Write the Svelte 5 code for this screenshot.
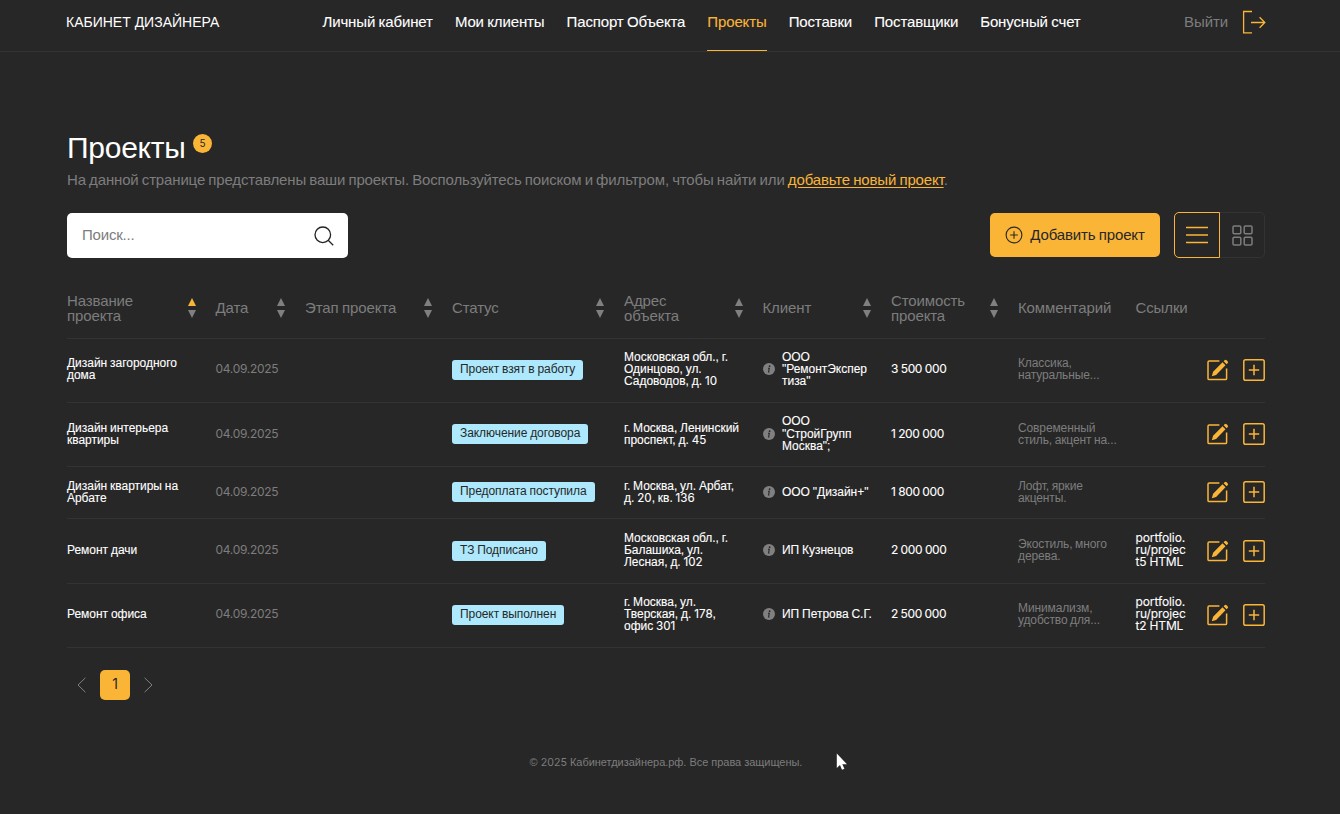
<script>
  const nav = [
    'Личный кабинет',
    'Мои клиенты',
    'Паспорт Объекта',
    'Проекты',
    'Поставки',
    'Поставщики',
    'Бонусный счет'
  ];

  const columns = [
    { label: 'Название\nпроекта', sort: 'asc' },
    { label: 'Дата', sort: 'none' },
    { label: 'Этап проекта', sort: 'none' },
    { label: 'Статус', sort: 'none' },
    { label: 'Адрес\nобъекта', sort: 'none' },
    { label: 'Клиент', sort: 'none' },
    { label: 'Стоимость\nпроекта', sort: 'none' },
    { label: 'Комментарий' },
    { label: 'Ссылки' },
    { label: '' }
  ];

  const projects = [
    {
      name: 'Дизайн загородного\nдома',
      date: '04.09.2025',
      status: 'Проект взят в работу',
      address: 'Московская обл., г.\nОдинцово, ул.\nСадоводов, д. 10',
      client: 'ООО\n"РемонтЭкспер\nтиза"',
      price: '3 500 000',
      comment: 'Классика,\nнатуральные...',
      link: ''
    },
    {
      name: 'Дизайн интерьера\nквартиры',
      date: '04.09.2025',
      status: 'Заключение договора',
      address: 'г. Москва, Ленинский\nпроспект, д. 45',
      client: 'ООО\n"СтройГрупп\nМосква";',
      price: '1 200 000',
      comment: 'Современный\nстиль, акцент на...',
      link: ''
    },
    {
      name: 'Дизайн квартиры на\nАрбате',
      date: '04.09.2025',
      status: 'Предоплата поступила',
      address: 'г. Москва, ул. Арбат,\nд. 20, кв. 136',
      client: 'ООО "Дизайн+"',
      price: '1 800 000',
      comment: 'Лофт, яркие\nакценты.',
      link: ''
    },
    {
      name: 'Ремонт дачи',
      date: '04.09.2025',
      status: 'ТЗ Подписано',
      address: 'Московская обл., г.\nБалашиха, ул.\nЛесная, д. 102',
      client: 'ИП Кузнецов',
      price: '2 000 000',
      comment: 'Экостиль, много\nдерева.',
      link: 'portfolio.\nru/projec\nt5 HTML'
    },
    {
      name: 'Ремонт офиса',
      date: '04.09.2025',
      status: 'Проект выполнен',
      address: 'г. Москва, ул.\nТверская, д. 178,\nофис 301',
      client: 'ИП Петрова С.Г.',
      price: '2 500 000',
      comment: 'Минимализм,\nудобство для...',
      link: 'portfolio.\nru/projec\nt2 HTML'
    }
  ];

  let active = $state('Проекты');
  let view = $state('list');
  let search = $state('');

  // digits are set in a different face than the cyrillic text
  const split = (str) => str.split(/(\d+)/).filter((s) => s !== '');
</script>

{#snippet mixed(str)}{#each split(str) as part}{#if /\d/.test(part)}<span class="num">{part}</span>{:else}{part}{/if}{/each}{/snippet}

<header>
  <a class="logo" href="#home">КАБИНЕТ ДИЗАЙНЕРА</a>
  <nav>
    {#each nav as item}
      <a href="#nav" class:active={item === active} onclick={() => (active = item)}>{item}</a>
    {/each}
  </nav>
  <a class="logout" href="#logout">
    Выйти
    <svg width="24" height="24" viewBox="0 0 24 24" fill="none" stroke="currentColor" stroke-width="1.3">
      <path d="M10 1.5H1.6v21.4H10M9 12.5h14M17.6 7.3l5.2 5.2-5.2 5.2" />
    </svg>
  </a>
</header>

<main>
  <div class="title">
    <h1>Проекты</h1>
    <span class="count">{projects.length}</span>
  </div>
  <p class="lead">
    На данной странице представлены ваши проекты. Воспользуйтесь поиском и фильтром, чтобы найти или <a href="#new">добавьте новый проект</a>.
  </p>

  <div class="toolbar">
    <label class="search">
      <input type="text" placeholder="Поиск..." bind:value={search} />
      <svg width="20" height="20" viewBox="0 0 20 20" fill="none" stroke="#222" stroke-width="1.3">
        <circle cx="8.8" cy="8.8" r="7.8" />
        <path d="M14.2 14.2l5 5" />
      </svg>
    </label>
    <div class="tools">
      <button class="add">
        <svg width="18" height="18" viewBox="0 0 18 18" fill="none" stroke="currentColor" stroke-width="1.1">
          <circle cx="9" cy="9" r="7.9" />
          <path d="M9 5.2v7.6M5.2 9h7.6" />
        </svg>
        Добавить проект
      </button>
      <div class="views">
        <button class="list" class:on={view === 'list'} onclick={() => (view = 'list')} aria-label="Список">
          <svg width="22" height="18" viewBox="0 0 22 18" stroke="currentColor" stroke-width="1.7">
            <path d="M0 1.5h22M0 9h22M0 16.5h22" />
          </svg>
        </button>
        <button class="grid" class:on={view === 'grid'} onclick={() => (view = 'grid')} aria-label="Плитка">
          <svg width="21" height="21" viewBox="0 0 21 21" fill="none" stroke="currentColor" stroke-width="1.5">
            <rect x="1" y="1" width="7.8" height="7.8" rx="1.2" />
            <rect x="12.2" y="1" width="7.8" height="7.8" rx="1.2" />
            <rect x="1" y="12.2" width="7.8" height="7.8" rx="1.2" />
            <rect x="12.2" y="12.2" width="7.8" height="7.8" rx="1.2" />
          </svg>
        </button>
      </div>
    </div>
  </div>

  <div class="table">
    <div class="row head">
      {#each columns as col}
        <div class="th">
          <span>{col.label}</span>
          {#if col.sort}
            <svg class="sort" width="8" height="20" viewBox="0 0 8 20">
              <path class:asc={col.sort === 'asc'} d="M4 0l4 8H0z" />
              <path d="M4 20l4-8H0z" />
            </svg>
          {/if}
        </div>
      {/each}
    </div>

    {#each projects as p}
      <div class="row">
        <div>{p.name}</div>
        <div class="date">{p.date}</div>
        <div></div>
        <div><span class="status">{p.status}</span></div>
        <div>{@render mixed(p.address)}</div>
        <div class="client">
          <svg width="12" height="12" viewBox="0 0 12 12">
            <circle cx="6" cy="6" r="6" fill="#808080" />
            <circle cx="6.6" cy="3.2" r=".9" fill="#272727" />
            <path d="M5 5.2h1.3L5.6 9h.8" fill="none" stroke="#272727" stroke-width="1.1" />
          </svg>
          <span>{p.client}</span>
        </div>
        <div class="price">{p.price}</div>
        <div class="comment">{p.comment}</div>
        <div class="link">{p.link}</div>
        <div class="actions">
          <button aria-label="Редактировать">
            <svg width="22" height="22" viewBox="0 0 22 22" fill="none" stroke="currentColor" stroke-width="1.5">
              <path d="M12.4 2H2.2a1.2 1.2 0 0 0-1.2 1.2v16.2a1.2 1.2 0 0 0 1.2 1.2h16.2a1.2 1.2 0 0 0 1.2-1.2V9.6" />
              <path d="M4.8 17.2l1.3-4.4 9.4-9.5 3 3-9.4 9.6zM16.6 2.2l1-1a1.4 1.4 0 0 1 2 0l1 1a1.4 1.4 0 0 1 0 2l-1 1z" fill="currentColor" stroke="none" />
            </svg>
          </button>
          <button aria-label="Добавить">
            <svg width="22" height="22" viewBox="0 0 22 22" fill="none" stroke="currentColor" stroke-width="1.5">
              <rect x=".8" y=".8" width="20.4" height="20.4" rx="1.8" />
              <path d="M11 5.8v10.4M5.8 11h10.4" />
            </svg>
          </button>
        </div>
      </div>
    {/each}
  </div>

  <div class="pager">
    <svg width="9" height="16" viewBox="0 0 9 16"><path d="M8.4.8L1 8l7.4 7.2" /></svg>
    <span class="page">1</span>
    <svg width="9" height="16" viewBox="0 0 9 16"><path d="M.6.8L8 8 .6 15.2" /></svg>
  </div>
</main>

<footer>© <span class="num">2025</span> Кабинетдизайнера.рф. Все права защищены.</footer>

<svg class="cursor" width="12" height="18" viewBox="0 0 12 18">
  <path d="M.8.5v14.5l3.2-3 2 4.8 2.4-1-2.1-4.6h4.6z" fill="#fff" />
</svg>

<style>
  :global(body) {
    background: #272727;
    color: #fff;
    font: 15px/15px 'Liberation Sans', Arial, sans-serif;
    height: 814px;
    overflow: hidden;
  }

  a {
    color: inherit;
    text-decoration: none;
  }

  button {
    display: flex;
    align-items: center;
    justify-content: center;
    padding: 0;
    border: 0;
    background: none;
    color: #fab537;
    font: inherit;
    cursor: pointer;
  }

  svg {
    display: block;
    flex: none;
  }

  .num {
    font-family: Inter, sans-serif;
    font-size: 0.97em;
    letter-spacing: 0;
  }

  header {
    display: flex;
    justify-content: space-between;
    box-sizing: border-box;
    height: 52px;
    padding: 0 74px 0 66px;
    border-bottom: 1px solid #333;
  }

  .logo {
    width: 256.5px;
    padding-top: 15px;
    font-size: 14px;
  }

  nav {
    display: flex;
    flex: 1;
    gap: 22.1px;
    letter-spacing: -0.14px;
    word-spacing: -0.6px;
    -webkit-text-stroke: 0.1px;
  }

  nav a {
    box-sizing: border-box;
    height: 51px;
    padding-top: 14px;
    border-bottom: 1px solid transparent;
    white-space: nowrap;
  }

  nav a.active {
    color: #fab537;
    border-color: #fab537;
  }

  .logout {
    display: flex;
    gap: 14px;
    padding-top: 14px;
    color: #7d7d7d;
    letter-spacing: -0.1px;
  }

  .logout svg {
    margin-top: -4px;
    color: #fab537;
  }

  main {
    width: 1198px;
    margin-left: 67px;
    padding-top: 78px;
  }

  .title {
    display: flex;
    gap: 7.5px;
    height: 40px;
  }

  h1 {
    margin: 0;
    font-size: 30px;
    line-height: 36px;
    font-weight: 400;
    letter-spacing: -0.25px;
  }

  .count {
    width: 19px;
    height: 19px;
    margin-top: 4px;
    border-radius: 50%;
    background: #fab537;
    color: #272727;
    font: 10px/18px Inter, sans-serif;
    text-align: center;
  }

  .lead {
    margin: 1px 0 0;
    color: #7d7d7d;
    line-height: 18px;
    letter-spacing: -0.15px;
    word-spacing: -0.8px;
  }

  .lead a {
    color: #fab537;
    text-decoration: underline;
    text-underline-offset: 2px;
  }

  .toolbar {
    display: flex;
    justify-content: space-between;
    margin-top: 23px;
  }

  .search {
    display: flex;
    align-items: center;
    box-sizing: border-box;
    width: 281px;
    height: 45px;
    margin-top: 1px;
    padding: 0 14px 0 15px;
    border-radius: 5px;
    background: #fff;
  }

  .search input {
    flex: 1;
    min-width: 0;
    padding: 0 0 2px;
    border: 0;
    outline: 0;
    font: inherit;
    letter-spacing: -0.2px;
  }

  .search input::placeholder {
    color: #7d7d7d;
  }

  .tools {
    display: flex;
    gap: 14px;
  }

  .add {
    gap: 7px;
    width: 170px;
    height: 44px;
    margin-top: 1px;
    padding-bottom: 1px;
    border-radius: 5px;
    background: #fab537;
    color: #272727;
    letter-spacing: -0.15px;
    word-spacing: -0.6px;
  }

  .add svg {
    margin-top: 1px;
  }

  .views {
    display: flex;
  }

  .views button {
    box-sizing: border-box;
    width: 46px;
    height: 46px;
    border: 1px solid #333;
    color: #7d7d7d;
  }

  .views .list {
    border-radius: 5px 0 0 5px;
  }

  .views .grid {
    width: 45px;
    border-left: 0;
    border-radius: 0 5px 5px 0;
  }

  .views button.on {
    border-color: #fab537;
    color: #fab537;
  }

  .table {
    margin-top: 20px;
  }

  .row {
    display: grid;
    grid-template-columns: 148.5px 89.5px 147px 172px 138.5px 128.5px 127px 117.5px 71px 1fr;
    align-items: center;
    box-sizing: border-box;
    min-height: 52.2px;
    padding: 12.6px 0 14.4px;
    border-bottom: 1px solid #333;
    font-size: 12px;
    line-height: 12.1px;
    letter-spacing: -0.03px;
    word-spacing: -0.4px;
    white-space: pre;
    -webkit-text-stroke: 0.1px;
  }

  .head {
    height: 60.6px;
    padding: 0;
    color: #7d7d7d;
    font-size: 15px;
    line-height: 15px;
    letter-spacing: -0.12px;
    -webkit-text-stroke: 0;
  }

  .th {
    display: flex;
    align-items: center;
    justify-content: space-between;
    padding-right: 20px;
  }

  .sort {
    margin-top: 1px;
    fill: #808080;
  }

  .sort .asc {
    fill: #fab537;
  }

  .date {
    color: #7d7d7d;
    font-family: Inter, sans-serif;
    letter-spacing: -0.3px;
    -webkit-text-stroke: 0;
  }

  .status {
    display: inline-block;
    margin-top: 1px;
    padding: 3px 8px 5px;
    border-radius: 3px;
    background: #ade8fc;
    color: #272727;
    letter-spacing: -0.07px;
    -webkit-text-stroke: 0;
  }

  .client {
    display: flex;
    align-items: center;
    gap: 7.5px;
  }

  .price {
    font-family: Inter, sans-serif;
    letter-spacing: -0.35px;
  }

  .comment {
    color: #7d7d7d;
    letter-spacing: -0.12px;
    word-spacing: -0.6px;
    -webkit-text-stroke: 0;
  }

  .link {
    font-family: Inter, sans-serif;
    letter-spacing: -0.1px;
  }

  .actions {
    display: flex;
    justify-content: space-between;
    padding-top: 1px;
  }

  .pager {
    display: flex;
    align-items: center;
    gap: 14px;
    margin: 22.5px 0 0 10px;
    fill: none;
    stroke: #808080;
  }

  .page {
    width: 30px;
    height: 30px;
    border-radius: 5px;
    background: #fab537;
    color: #272727;
    font: 14px/28px Inter, sans-serif;
    text-align: center;
  }

  footer {
    margin-top: 55px;
    padding-right: 8px;
    color: #7d7d7d;
    font-size: 11px;
    letter-spacing: -0.03px;
    text-align: center;
  }

  .cursor {
    position: absolute;
    top: 753px;
    left: 836px;
  }
</style>
